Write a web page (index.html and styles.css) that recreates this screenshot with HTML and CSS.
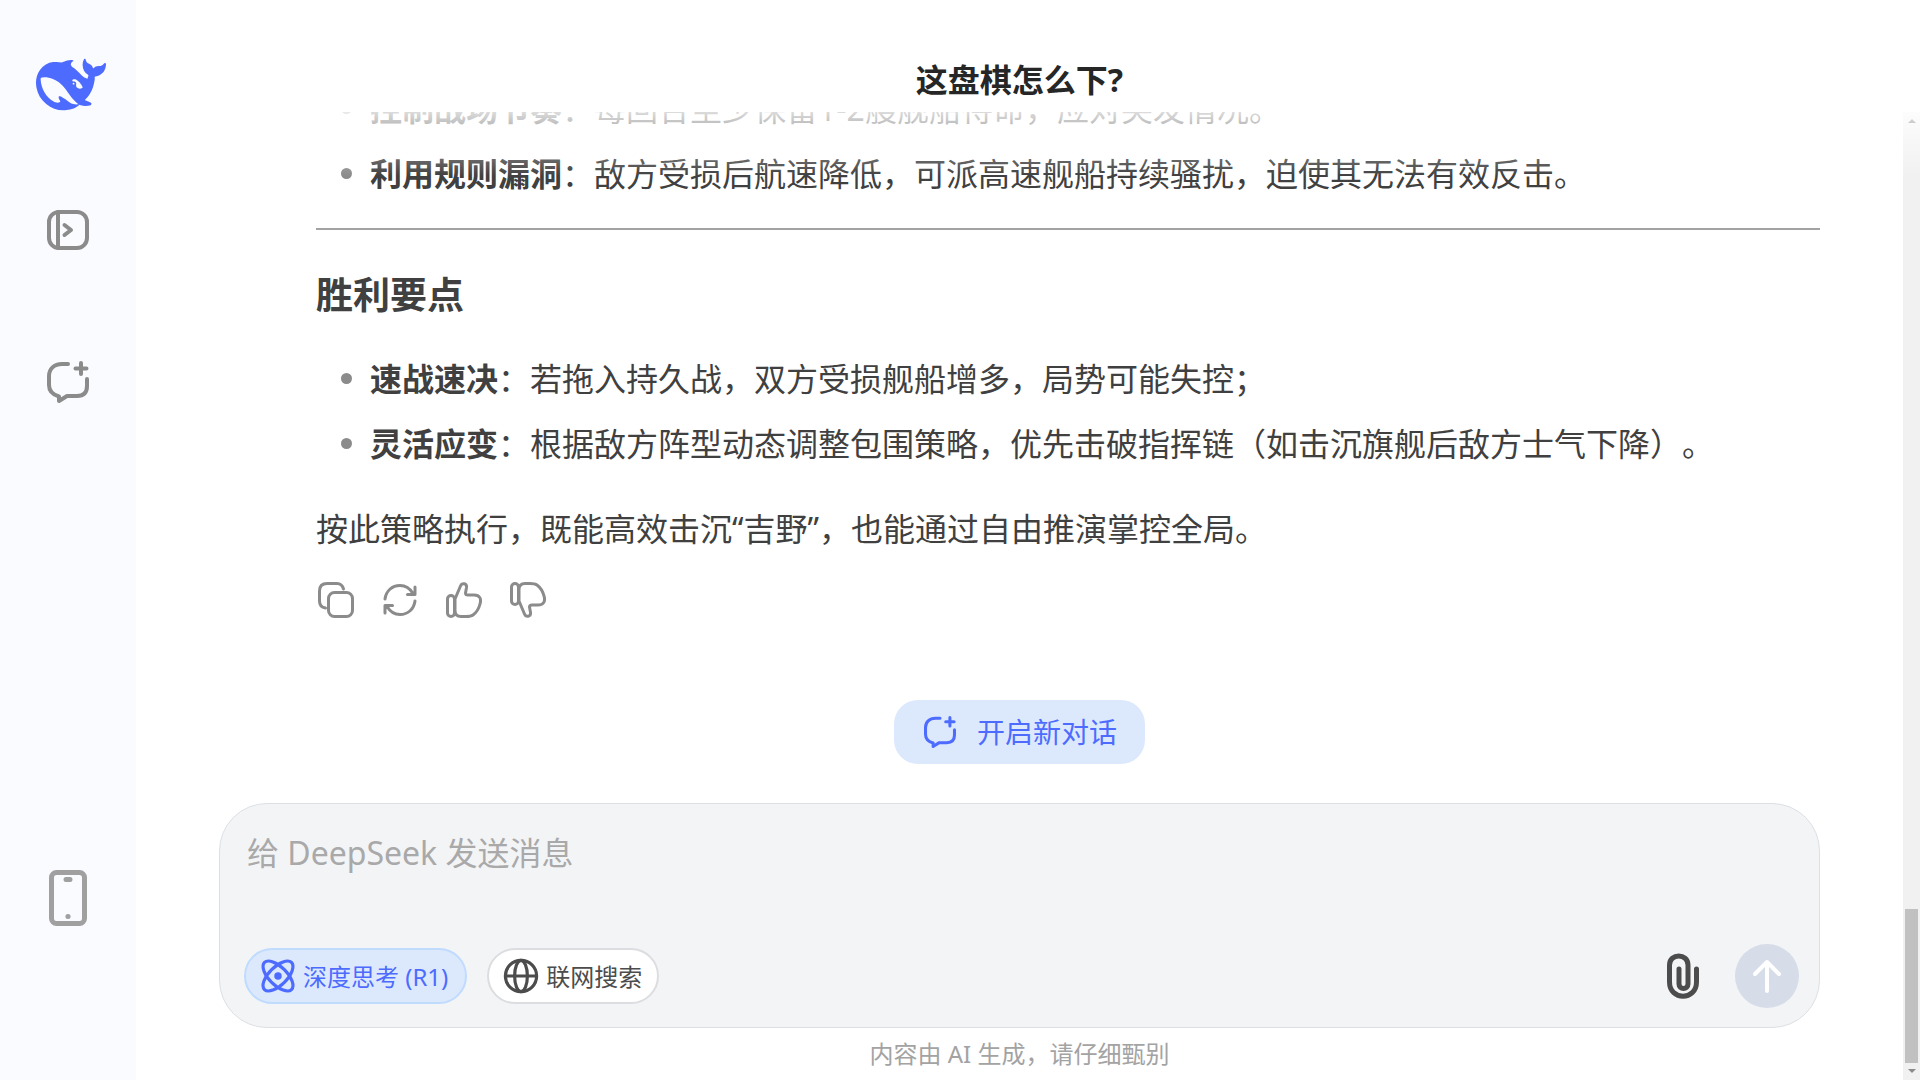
FILE: index.html
```html
<!DOCTYPE html>
<html lang="zh-CN">
<head>
<meta charset="utf-8">
<meta name="viewport" content="width=device-width, initial-scale=1">
<title>这盘棋怎么下?</title>
<link rel="stylesheet" href="styles.css">
</head>
<body>
<svg class="sprite" aria-hidden="true">
  <symbol id="new-chat" viewBox="0 0 42 42">
    <path d="M21 3H15C7 3 2 8 2 15v9c0 6 3 9.500 10 11.500V40l8-5h10c7 0 10-4 10-10v-7" />
    <path d="M34 2v11M28.500 7.500h11" />
  </symbol>
  <symbol id="thumb" viewBox="0 0 36 36">
    <rect x="1.500" y="13.500" width="7" height="21" rx="3.500"/>
    <path d="M9 17l5.500-13c1.500-3.500 6.500-3 6 1.500l-1 5.500c0 1.500 1 2 2.500 2h6c6 0 7.500 4 6 9-1 4-3 8-7 11-2 1.500-4 1.500-7 1.500h-5c-3.500 0-6-2-6-6z"/>
  </symbol>
</svg>

<nav class="sidebar" aria-label="主导航">
  <a class="logo" href="#" aria-label="DeepSeek">
    <svg viewBox="0 0 24 24"><path d="M23.748 4.482c-.254-.124-.364.113-.512.234-.051.039-.094.09-.137.136-.372.397-.806.657-1.373.626-.829-.046-1.537.214-2.163.848-.133-.782-.575-1.248-1.247-1.548-.352-.156-.708-.311-.955-.65-.172-.241-.219-.51-.305-.774-.055-.16-.11-.323-.293-.35-.2-.031-.278.136-.356.276-.313.572-.434 1.202-.422 1.84.027 1.436.633 2.58 1.838 3.393.137.093.172.187.129.323-.082.28-.18.552-.266.833-.055.179-.137.217-.329.14a5.526 5.526 0 01-1.736-1.18c-.857-.828-1.631-1.742-2.597-2.458a11.365 11.365 0 00-.689-.471c-.985-.957.13-1.743.388-1.836.27-.098.093-.432-.779-.428-.872.004-1.67.295-2.687.684a3.055 3.055 0 01-.465.137 9.597 9.597 0 00-2.883-.102c-1.885.21-3.39 1.102-4.497 2.623C.082 8.606-.231 10.684.152 12.85c.403 2.284 1.569 4.175 3.36 5.653 1.858 1.533 3.997 2.284 6.438 2.14 1.482-.085 3.133-.284 4.994-1.86.47.234.962.327 1.78.397.63.059 1.236-.03 1.705-.128.735-.156.684-.837.419-.961-2.155-1.004-1.682-.595-2.113-.926 1.096-1.296 2.746-2.642 3.392-7.003.05-.347.007-.565 0-.845-.004-.17.035-.237.23-.256a4.173 4.173 0 001.545-.475c1.396-.763 1.96-2.015 2.093-3.517.02-.23-.004-.467-.247-.588zM11.581 18c-2.089-1.642-3.102-2.183-3.52-2.16-.392.024-.321.471-.235.763.09.288.207.486.371.739.114.167.192.416-.113.603-.673.416-1.842-.14-1.897-.167-1.361-.802-2.5-1.86-3.301-3.307-.774-1.393-1.224-2.887-1.298-4.482-.02-.386.093-.522.477-.592a4.696 4.696 0 011.529-.039c2.132.312 3.946 1.265 5.468 2.774.868.86 1.525 1.887 2.202 2.891.72 1.066 1.494 2.082 2.48 2.914.348.292.625.514.891.677-.802.09-2.14.11-3.054-.614zm1-6.44a.306.306 0 01.415-.287.302.302 0 01.2.288.306.306 0 01-.31.307.303.303 0 01-.304-.308zm3.11 1.596c-.2.081-.399.151-.59.16a1.245 1.245 0 01-.798-.254c-.274-.23-.47-.358-.552-.758a1.73 1.73 0 01.016-.588c.07-.327-.008-.537-.239-.727-.187-.156-.426-.199-.688-.199a.559.559 0 01-.254-.078c-.11-.054-.2-.19-.114-.358.028-.054.16-.186.192-.21.356-.202.767-.136 1.146.016.352.144.618.408 1.001.782.391.451.462.576.685.914.176.265.336.537.445.848.067.195-.019.354-.25.452z"/></svg>
  </a>
  <button class="icon-button side-icon" type="button" aria-label="打开边栏">
    <svg viewBox="0 0 42 42"><rect x="2" y="3" width="38" height="36" rx="10"/><path d="M11 3v36M17.500 16l6.500 5-6.500 5"/></svg>
  </button>
  <button class="icon-button side-icon" type="button" aria-label="开启新对话">
    <svg viewBox="0 0 42 42"><use href="#new-chat"/></svg>
  </button>
  <button class="icon-button side-icon phone" type="button" aria-label="下载手机应用">
    <svg viewBox="0 0 38 56"><rect x="2.500" y="2.500" width="33" height="51" rx="5"/><path d="M17 9.500h4M18.900 46.500h.2"/></svg>
  </button>
</nav>

<main class="chat">
  <header class="chat-header"><h1>这盘棋怎么下?</h1></header>
  <div class="viewport">
    <div class="column">
      <section class="messages">
        <article class="answer">
          <ul>
            <li><strong>控制战场节奏</strong>：每回合至少保留1-2艘舰船待命，应对突发情况。</li>
            <li><strong>利用规则漏洞</strong>：敌方受损后航速降低，可派高速舰船持续骚扰，迫使其无法有效反击。</li>
          </ul>
          <hr>
          <h2>胜利要点</h2>
          <ul>
            <li><strong>速战速决</strong>：若拖入持久战，双方受损舰船增多，局势可能失控；</li>
            <li><strong>灵活应变</strong>：根据敌方阵型动态调整包围策略，优先击破指挥链（如击沉旗舰后敌方士气下降）。</li>
          </ul>
          <p>按此策略执行，既能高效击沉“吉野”，也能通过自由推演掌控全局。</p>
          <div class="actions">
            <button class="icon-button" type="button" aria-label="复制">
              <svg viewBox="0 0 36 36"><rect x="10.500" y="10.500" width="24" height="24" rx="6"/><path d="M25.500 7C24.500 3.500 22.500 1.500 19 1.500H9C4 1.500 1.500 4 1.500 9v10c0 4 2 6.500 6 7"/></svg>
            </button>
            <button class="icon-button" type="button" aria-label="重新生成">
              <svg viewBox="0 0 36 36"><path d="M3 17C4 9 10 3.500 18 3.500c6 0 10 3 13 8M33 5v7.500h-7.500M33 19c-1 8-7 13.500-15 13.500-6 0-10-3-13-8M3 31v-7.500h7.500"/></svg>
            </button>
            <button class="icon-button" type="button" aria-label="喜欢">
              <svg viewBox="0 0 36 36"><use href="#thumb"/></svg>
            </button>
            <button class="icon-button" type="button" aria-label="不喜欢">
              <svg viewBox="0 0 36 36"><use href="#thumb" width="36" height="36" transform="matrix(1 0 0 -1 0 36)"/></svg>
            </button>
          </div>
        </article>
        <button class="start-chat" type="button"><svg viewBox="0 0 42 42"><use href="#new-chat"/></svg>开启新对话</button>
      </section>

      <form class="composer">
        <textarea placeholder="给 DeepSeek 发送消息" aria-label="给 DeepSeek 发送消息" rows="2"></textarea>
        <div class="tools">
          <button class="pill pill-active" type="button" aria-pressed="true">
            <svg viewBox="0 0 32 32"><ellipse cx="16" cy="16" rx="18" ry="8.500" transform="rotate(45 16 16)"/><ellipse cx="16" cy="16" rx="18" ry="8.500" transform="rotate(-45 16 16)"/><circle class="dot" cx="16" cy="16" r="3.500"/></svg>深度思考 (R1)
          </button>
          <button class="pill" type="button" aria-pressed="false">
            <svg viewBox="0 0 32 32"><circle cx="16" cy="16" r="14.700"/><ellipse cx="16" cy="16" rx="6" ry="14.700"/><path d="M1.500 16h29"/></svg>联网搜索
          </button>
          <button class="icon-button attach" type="button" aria-label="上传附件">
            <svg viewBox="0 0 32 46"><path d="M12 16v15c0 6 9 6 9 0V12c0-12-18.500-12-18.500 0v17c0 19 27 19 27 0V16"/></svg>
          </button>
          <button class="send" type="submit" aria-label="发送">
            <svg viewBox="0 0 32 36"><path d="M16 33V4M4 16L16 4l12 12"/></svg>
          </button>
        </div>
      </form>
      <footer>内容由 AI 生成，请仔细甄别</footer>
    </div>
    <div class="scrollbar" aria-hidden="true"><i class="arrow up"></i><i class="thumb"></i><i class="arrow down"></i></div>
  </div>
</main>
</body>
</html>
```
FILE: styles.css
```css
* { box-sizing: border-box; }

body {
  margin: 0;
  display: flex;
  height: 100vh;
  overflow: hidden;
  background: #fff;
  color: #404040;
  font-family: "Noto Sans", "Noto Sans CJK SC", sans-serif;
  font-size: 32px;
  line-height: 57px;
  text-spacing-trim: space-all;
}

button, textarea { font: inherit; color: inherit; }
button { border: 0; padding: 0; background: none; cursor: pointer; }

svg {
  display: block;
  fill: none;
  stroke: currentColor;
  stroke-width: 3;
  stroke-linecap: round;
  stroke-linejoin: round;
}

.sprite { position: absolute; width: 0; height: 0; }

.icon-button { display: flex; }

/* Sidebar */
.sidebar {
  flex: none;
  width: 136px;
  display: flex;
  flex-direction: column;
  align-items: center;
  padding: 50px 0 154px;
  background: #f9fbff;
  color: #8b8b8b;
}

.logo { color: #4d6bfe; margin-left: 5px; }
.logo svg { width: 70px; height: 70px; fill: currentColor; stroke: none; }
.side-icon { margin-top: 89px; }
.side-icon + .side-icon { margin-top: 110px; }
.side-icon svg { width: 42px; height: 42px; stroke-width: 4; }
.sidebar .phone { margin-top: auto; color: #a0a0a0; }
.phone svg { width: 38px; height: 56px; stroke-width: 5; }

/* Chat */
.chat {
  flex: 1;
  min-width: 0;
  display: flex;
  flex-direction: column;
}

.chat-header {
  flex: none;
  height: 112px;
  padding: 57px 17px 0 0;
  text-align: center;
}

h1 { margin: 0; font-size: 32px; line-height: 46px; color: #262626; }

.viewport {
  position: relative;
  flex: 1;
  min-height: 0;
  display: flex;
}

.viewport::before {
  content: "";
  position: absolute;
  inset: 0 0 auto;
  height: 64px;
  background: linear-gradient(#ffffffd0, #fff0);
  z-index: 1;
}

.column {
  flex: 1;
  min-width: 0;
  display: flex;
  flex-direction: column;
  padding: 0 83px;
}

.messages {
  flex: 1;
  min-height: 0;
  overflow: hidden;
  display: flex;
  flex-direction: column;
  justify-content: flex-end;
  align-items: center;
  padding-bottom: 39px;
}

.answer { flex: none; align-self: stretch; padding-left: 97px; }

ul {
  margin: 0;
  padding: 0;
  list-style: none;
  display: grid;
  gap: 8px;
}

li { display: flex; align-items: center; white-space: nowrap; }
li::before {
  content: "";
  width: 11px;
  height: 11px;
  margin: 0 18px 0 25px;
  border-radius: 50%;
  background: #8b8b8b;
}

hr { margin: 26px 0; border: 0; height: 2px; background: #a3a3a3; }
h2 { margin: 36px 0 26px; font-size: 37px; line-height: 58px; }
.answer p { margin: 28px 0 25px; }

.actions { display: flex; gap: 28px; padding-left: 2px; color: #8b8b8b; }
.actions svg { width: 36px; height: 36px; }

.start-chat {
  flex: none;
  display: flex;
  align-items: center;
  gap: 21px;
  height: 64px;
  margin-top: 82px;
  padding: 0 28px 0 30px;
  border-radius: 24px;
  background: #dce9fc;
  color: #4d6bfe;
  font-size: 28px;
}

.start-chat svg { width: 32px; height: 32px; stroke-width: 4; }

/* Composer */
.composer {
  flex: none;
  display: flex;
  flex-direction: column;
  padding: 20px 20px 19px 24px;
  border: 1px solid #dce0e4;
  border-radius: 48px;
  background: #f3f4f6;
}

textarea {
  height: 120px;
  padding: 0 3px;
  border: 0;
  outline: 0;
  resize: none;
  background: none;
}

textarea::placeholder { color: #a9a9a9; opacity: 1; }

.tools { display: flex; align-items: center; gap: 20px; }

.pill {
  display: flex;
  align-items: center;
  gap: 8px;
  height: 56px;
  padding: 0 15px;
  border: 2px solid #dcdde0;
  border-radius: 28px;
  background: #fff;
  color: #4c4c4c;
  font-size: 24px;
}

.pill svg { width: 34px; height: 34px; stroke-width: 3; overflow: visible; }
.pill .dot { fill: currentColor; stroke: none; }
.pill-active { padding-right: 17px; border-color: #bfdbfe; background: #dce9fc; color: #4d6bfe; }

.attach { margin: 0 16px 0 auto; color: #4c4c4c; }
.attach svg { width: 32px; height: 46px; stroke-width: 5; }

.send {
  display: grid;
  place-items: center;
  width: 64px;
  height: 64px;
  border-radius: 50%;
  background: #d6dce8;
  color: #fff;
}

.send svg { width: 32px; height: 36px; stroke-width: 4; }

footer {
  flex: none;
  height: 52px;
  font-size: 24px;
  line-height: 52px;
  text-align: center;
  color: #a3a3a3;
}

/* Scrollbar */
.scrollbar {
  flex: none;
  width: 17px;
  display: flex;
  flex-direction: column;
  align-items: center;
  padding: 7px 0;
  background: #f1f1f1;
}

.arrow { border: 4px solid transparent; }
.up { border-top: 0; border-bottom-color: #606060; }
.down { border-bottom: 0; border-top-color: #8b8b8b; }
.thumb { width: 13px; height: 154px; margin: auto 0 6px; background: #c1c1c1; }
```
